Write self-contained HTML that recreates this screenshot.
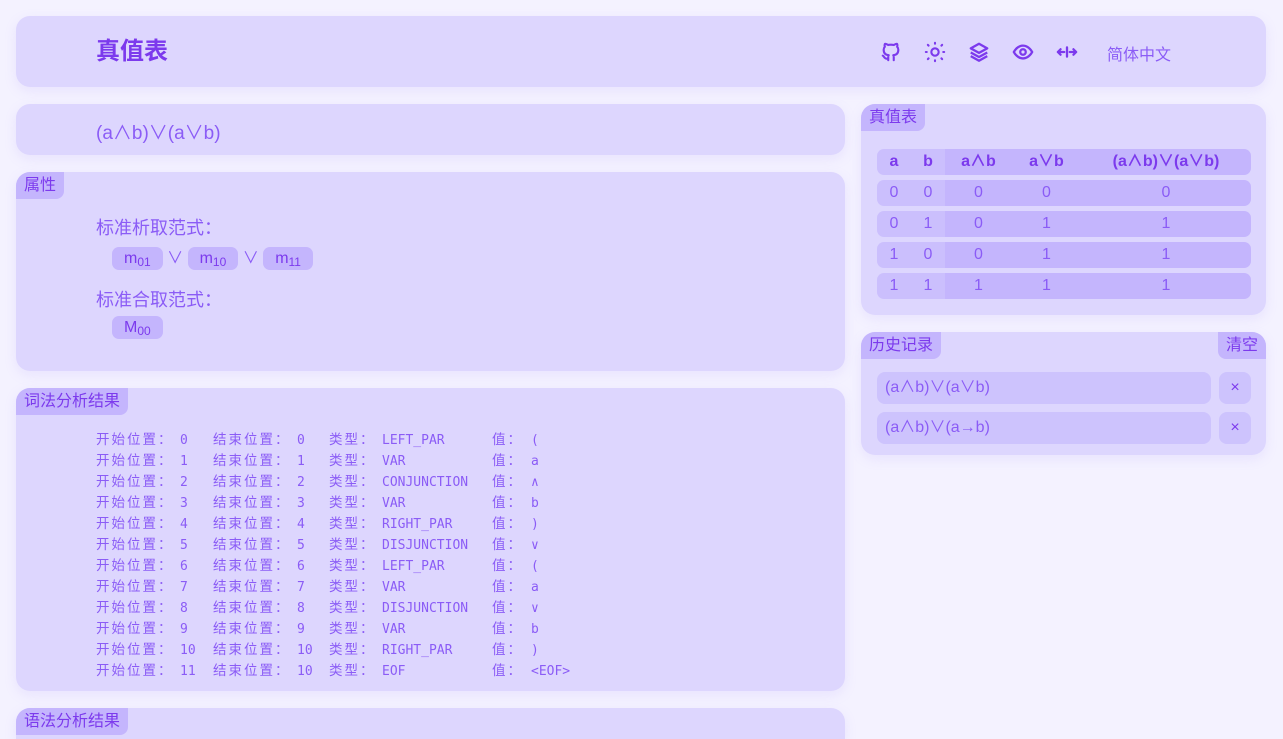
<!DOCTYPE html>
<html><head><meta charset="utf-8"><style>
*{box-sizing:border-box;margin:0;padding:0}
html,body{width:1283px;height:739px;overflow:hidden}
body{background:#f4f2ff;font-family:"Liberation Sans","Noto Sans CJK SC",sans-serif;color:#8b5cf6;position:relative}
.card{position:absolute;background:#ddd6fe;border-radius:14px;box-shadow:0 4px 12px rgba(167,139,250,.15);overflow:hidden}
.tag{position:absolute;left:0;top:0;background:#c4b5fd;color:#7c3aed;font-size:16px;height:27px;line-height:27px;padding:0 8px;border-radius:0 0 8px 0}
.chip{display:inline-block;background:#c4b5fd;border-radius:7px;height:23px;line-height:23px;padding:0 12px;font-size:16px;color:#7c3aed}
.chip sub{font-size:12px;vertical-align:-3px}
.lex{position:absolute;left:96px;top:428px;font-family:"DejaVu Sans Mono","Noto Sans CJK SC",monospace;font-size:13px;color:#8b5cf6}
.lex div{position:relative;height:21px}
.lex span{position:absolute;top:2px;white-space:nowrap;line-height:21px;height:21px}
.lex span.c{top:0;font-family:"Noto Sans CJK SC",sans-serif;font-size:13.5px;letter-spacing:2px}
table{position:absolute;left:877px;top:144px;border-collapse:separate;border-spacing:0 5px;width:374px;font-size:16px;text-align:center}
td,th{height:26px;background:#c4b5fd;color:#8b5cf6;font-weight:normal;padding:0;line-height:26px}
th{font-weight:bold;color:#7c3aed}
td.l,th.l{background:#cbbffd}
tr td:first-child,tr th:first-child{border-radius:7px 0 0 7px}
tr td:last-child,tr th:last-child{border-radius:0 7px 7px 0}
.hist{position:absolute;left:877px;width:334px;height:32px;background:#cdc3fd;border-radius:8px;font-size:16px;line-height:32px;padding-left:8px;color:#8b5cf6}
.x{position:absolute;left:1219px;width:32px;height:32px;background:#cdc3fd;border-radius:8px;text-align:center;line-height:31px;font-size:16px;color:#7c3aed}
</style></head><body>
<div class="card" style="left:16px;top:16px;width:1250px;height:71px">
 <div style="position:absolute;left:80px;top:20px;font-size:24px;line-height:32px;font-weight:bold;color:#7c3aed">真值表</div>
 <svg style="position:absolute;left:864px;top:24px" width="22" height="24" viewBox="0 0 24 24" fill="none" stroke="#7c3aed" stroke-width="2.3" stroke-linecap="round" stroke-linejoin="round"><path d="M9 19c-4.3 1.4-4.3-2.5-6-3m12 5v-3.5c0-1 .1-1.4-.5-2 2.8-.3 5.5-1.4 5.5-6a4.6 4.6 0 0 0-1.3-3.2 4.2 4.2 0 0 0-.1-3.2s-1.1-.3-3.5 1.3a12.3 12.3 0 0 0-6.2 0C6.5 2.8 5.4 3.1 5.4 3.1a4.2 4.2 0 0 0-.1 3.2A4.6 4.6 0 0 0 4 9.5c0 4.6 2.7 5.7 5.5 6-.6.6-.6 1.2-.5 2V21"/></svg>
 <svg style="position:absolute;left:908px;top:25px" width="22" height="22" viewBox="0 0 24 24" fill="none" stroke="#7c3aed" stroke-width="2.3" stroke-linecap="round"><circle cx="12" cy="12" r="4"/><path d="M12 2v1M12 21v1M4.2 4.2l.8.8M19 19l.8.8M2 12h1M21 12h1M4.2 19.8l.8-.8M19 5l.8-.8"/></svg>
 <svg style="position:absolute;left:952px;top:25px" width="22" height="22" viewBox="0 0 24 24" fill="none" stroke="#7c3aed" stroke-width="2.5" stroke-linejoin="round"><path d="M12 3 3 8l9 5 9-5z"/><path d="M3 12.5l9 5 9-5M3 16.5l9 5 9-5"/></svg>
 <svg style="position:absolute;left:996px;top:25px" width="22" height="22" viewBox="0 0 24 24" fill="none" stroke="#7c3aed" stroke-width="2.5"><path d="M2 12s3.5-7 10-7 10 7 10 7-3.5 7-10 7S2 12 2 12z"/><circle cx="12" cy="12" r="3"/></svg>
 <svg style="position:absolute;left:1040px;top:27px" width="22" height="18" viewBox="0 0 24 18" fill="none" stroke="#7c3aed" stroke-width="2.5" stroke-linecap="round" stroke-linejoin="round"><path d="M12 4v10M2 9h7M5 6 2 9l3 3M15 9h7M19 6l3 3-3 3"/></svg>
 <div style="position:absolute;left:1091px;top:25px;font-size:16px;color:#8b5cf6">简体中文</div>
</div>

<div class="card" style="left:16px;top:104px;width:829px;height:51px">
 <div style="position:absolute;left:80px;top:14px;font-size:19px;color:#8b5cf6">(a∧b)∨(a∨b)</div>
</div>

<div class="card" style="left:16px;top:172px;width:829px;height:199px">
 <div class="tag">属性</div>
 <div style="position:absolute;left:80px;top:42px;font-size:18px;color:#8b5cf6">标准析取范式：</div>
 <div style="position:absolute;left:96px;top:72px;font-size:16px;color:#8b5cf6"><span class="chip">m<sub>01</sub></span> ∨ <span class="chip">m<sub>10</sub></span> ∨ <span class="chip">m<sub>11</sub></span></div>
 <div style="position:absolute;left:80px;top:114px;font-size:18px;color:#8b5cf6">标准合取范式：</div>
 <div style="position:absolute;left:96px;top:144px"><span class="chip">M<sub>00</sub></span></div>
</div>

<div class="card" style="left:16px;top:388px;width:829px;height:303px">
 <div class="tag">词法分析结果</div>
</div>
<div class="lex">
<div><span class="c" style="left:0">开始位置：</span><span style="left:84px">0</span><span class="c" style="left:117px">结束位置：</span><span style="left:201px">0</span><span class="c" style="left:233px">类型：</span><span style="left:286px">LEFT_PAR</span><span class="c" style="left:396px">值：</span><span style="left:435px">(</span></div>
<div><span class="c" style="left:0">开始位置：</span><span style="left:84px">1</span><span class="c" style="left:117px">结束位置：</span><span style="left:201px">1</span><span class="c" style="left:233px">类型：</span><span style="left:286px">VAR</span><span class="c" style="left:396px">值：</span><span style="left:435px">a</span></div>
<div><span class="c" style="left:0">开始位置：</span><span style="left:84px">2</span><span class="c" style="left:117px">结束位置：</span><span style="left:201px">2</span><span class="c" style="left:233px">类型：</span><span style="left:286px">CONJUNCTION</span><span class="c" style="left:396px">值：</span><span style="left:435px">∧</span></div>
<div><span class="c" style="left:0">开始位置：</span><span style="left:84px">3</span><span class="c" style="left:117px">结束位置：</span><span style="left:201px">3</span><span class="c" style="left:233px">类型：</span><span style="left:286px">VAR</span><span class="c" style="left:396px">值：</span><span style="left:435px">b</span></div>
<div><span class="c" style="left:0">开始位置：</span><span style="left:84px">4</span><span class="c" style="left:117px">结束位置：</span><span style="left:201px">4</span><span class="c" style="left:233px">类型：</span><span style="left:286px">RIGHT_PAR</span><span class="c" style="left:396px">值：</span><span style="left:435px">)</span></div>
<div><span class="c" style="left:0">开始位置：</span><span style="left:84px">5</span><span class="c" style="left:117px">结束位置：</span><span style="left:201px">5</span><span class="c" style="left:233px">类型：</span><span style="left:286px">DISJUNCTION</span><span class="c" style="left:396px">值：</span><span style="left:435px">∨</span></div>
<div><span class="c" style="left:0">开始位置：</span><span style="left:84px">6</span><span class="c" style="left:117px">结束位置：</span><span style="left:201px">6</span><span class="c" style="left:233px">类型：</span><span style="left:286px">LEFT_PAR</span><span class="c" style="left:396px">值：</span><span style="left:435px">(</span></div>
<div><span class="c" style="left:0">开始位置：</span><span style="left:84px">7</span><span class="c" style="left:117px">结束位置：</span><span style="left:201px">7</span><span class="c" style="left:233px">类型：</span><span style="left:286px">VAR</span><span class="c" style="left:396px">值：</span><span style="left:435px">a</span></div>
<div><span class="c" style="left:0">开始位置：</span><span style="left:84px">8</span><span class="c" style="left:117px">结束位置：</span><span style="left:201px">8</span><span class="c" style="left:233px">类型：</span><span style="left:286px">DISJUNCTION</span><span class="c" style="left:396px">值：</span><span style="left:435px">∨</span></div>
<div><span class="c" style="left:0">开始位置：</span><span style="left:84px">9</span><span class="c" style="left:117px">结束位置：</span><span style="left:201px">9</span><span class="c" style="left:233px">类型：</span><span style="left:286px">VAR</span><span class="c" style="left:396px">值：</span><span style="left:435px">b</span></div>
<div><span class="c" style="left:0">开始位置：</span><span style="left:84px">10</span><span class="c" style="left:117px">结束位置：</span><span style="left:201px">10</span><span class="c" style="left:233px">类型：</span><span style="left:286px">RIGHT_PAR</span><span class="c" style="left:396px">值：</span><span style="left:435px">)</span></div>
<div><span class="c" style="left:0">开始位置：</span><span style="left:84px">11</span><span class="c" style="left:117px">结束位置：</span><span style="left:201px">10</span><span class="c" style="left:233px">类型：</span><span style="left:286px">EOF</span><span class="c" style="left:396px">值：</span><span style="left:435px">&lt;EOF&gt;</span></div>
</div>

<div class="card" style="left:16px;top:708px;width:829px;height:31px;border-radius:14px 14px 0 0">
 <div class="tag">语法分析结果</div>
</div>

<div class="card" style="left:861px;top:104px;width:405px;height:211px">
 <div class="tag">真值表</div>
</div>
<table>
<tr><th class="l" style="width:34px">a</th><th class="l" style="width:34px">b</th><th style="width:67px">a∧b</th><th style="width:69px">a∨b</th><th>(a∧b)∨(a∨b)</th></tr>
<tr><td class="l">0</td><td class="l">0</td><td>0</td><td>0</td><td>0</td></tr>
<tr><td class="l">0</td><td class="l">1</td><td>0</td><td>1</td><td>1</td></tr>
<tr><td class="l">1</td><td class="l">0</td><td>0</td><td>1</td><td>1</td></tr>
<tr><td class="l">1</td><td class="l">1</td><td>1</td><td>1</td><td>1</td></tr>
</table>

<div class="card" style="left:861px;top:332px;width:405px;height:123px">
 <div class="tag">历史记录</div>
 <div class="tag" style="left:auto;right:0;border-radius:0 0 0 8px;padding:0 8px">清空</div>
</div>
<div class="hist" style="top:372px">(a∧b)∨(a∨b)</div>
<div class="x" style="top:372px">×</div>
<div class="hist" style="top:412px">(a∧b)∨(a→b)</div>
<div class="x" style="top:412px">×</div>
</body></html>
